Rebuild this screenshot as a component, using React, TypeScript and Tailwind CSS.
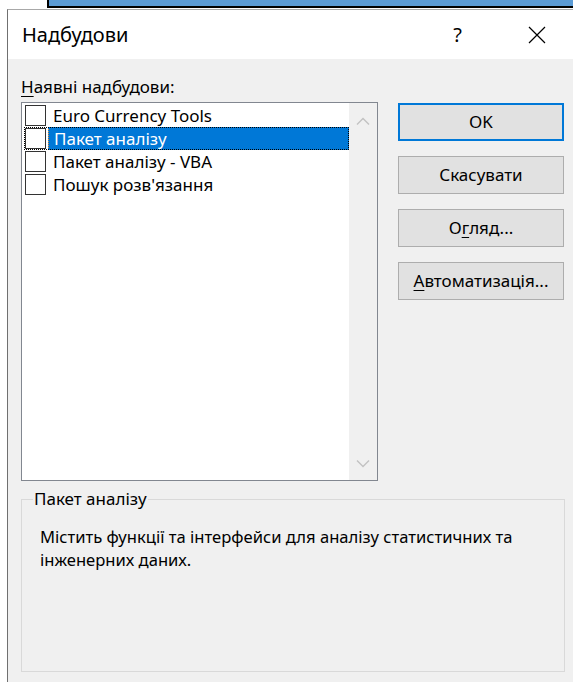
import React from 'react';

type AddIn = { name: string; checked: boolean };

const addIns: AddIn[] = [
  { name: 'Euro Currency Tools', checked: false },
  { name: 'Пакет аналізу', checked: false },
  { name: 'Пакет аналізу - VBA', checked: false },
  { name: "Пошук розв'язання", checked: false },
];

const Chevron = ({ up }: { up?: boolean }) => (
  <svg width="14" height="8" viewBox="0 0 14 8" fill="none">
    <path
      d={up ? 'M1 7.5 L7 1.5 L13 7.5' : 'M1 0.5 L7 6.5 L13 0.5'}
      stroke="#c2c2c2"
      strokeWidth="1.4"
    />
  </svg>
);

const DialogButton = ({
  children,
  primary,
}: {
  children: React.ReactNode;
  primary?: boolean;
}) => (
  <button
    className={`w-[166px] h-[38px] bg-[#e1e1e1] text-[17px] text-black flex items-center justify-center ${
      primary ? 'border-2 border-[#0078d7]' : 'border border-[#adadad]'
    }`}
  >
    {children}
  </button>
);

export default function App() {
  const selected = 1;

  return (
    <div className="w-[573px] h-[682px] overflow-hidden bg-white flex flex-col font-['Noto_Sans',sans-serif] text-black">
      {/* window peeking out behind the dialog */}
      <div className="h-[9px] shrink-0 flex">
        <div className="w-[47px]" />
        <div className="flex-1 h-[8px] bg-[#5b9bd5] border-l-2 border-b-2 border-black" />
      </div>

      <div className="flex-1 ml-[7px] border-l border-t border-l-[#707070] border-t-[#a8a8a8] flex flex-col min-h-0">
        {/* title bar */}
        <div className="h-[49px] shrink-0 bg-white flex items-center pl-[14px]">
          <span className="text-[20px] leading-none">Надбудови</span>
          <div className="ml-auto flex items-center pr-[27px]">
            <span className="text-[20px] leading-none">?</span>
            <svg className="ml-[66px]" width="18" height="18" viewBox="0 0 18 18">
              <path d="M1 1 L17 17 M17 1 L1 17" stroke="#000" strokeWidth="1.2" />
            </svg>
          </div>
        </div>

        {/* client area */}
        <div className="flex-1 bg-[#f0f0f0] pl-[13px] pt-[16px]">
          <div className="text-[17px] leading-[24px]">
            <span className="underline underline-offset-[3px]">Н</span>аявні надбудови:
          </div>

          <div className="mt-[3px] flex items-start">
            {/* add-in list */}
            <div className="w-[357px] h-[379px] border border-[#828790] bg-white flex">
              <div className="flex-1 pt-[1px] pl-[2px]">
                {addIns.map((item, i) => {
                  const isSel = i === selected;
                  return (
                    <div
                      key={item.name}
                      className={`h-[23px] flex items-center pl-[1px] ${
                        isSel ? 'outline outline-1 outline-dotted outline-black -outline-offset-1' : ''
                      }`}
                    >
                      <div className="w-[21px] h-[21px] border border-[#333333] bg-white shrink-0" />
                      <div
                        className={`ml-[2px] h-[23px] flex-1 flex items-center pl-[5px] text-[17px] whitespace-nowrap ${
                          isSel
                            ? 'bg-[#0078d7] text-white border border-dotted border-[#e8903a] pl-[4px]'
                            : ''
                        }`}
                      >
                        {item.name}
                      </div>
                    </div>
                  );
                })}
              </div>
              <div className="w-[28px] bg-[#f0f0f0] flex flex-col items-center justify-between pt-[14px] pb-[12px]">
                <Chevron up />
                <Chevron />
              </div>
            </div>

            {/* action buttons */}
            <div className="ml-[20px] mt-[1px] flex flex-col gap-[15px]">
              <DialogButton primary>OK</DialogButton>
              <DialogButton>Скасувати</DialogButton>
              <DialogButton>
                О<span className="underline underline-offset-[3px]">г</span>ляд...
              </DialogButton>
              <DialogButton>
                <span className="underline underline-offset-[3px]">А</span>втоматизація...
              </DialogButton>
            </div>
          </div>

          {/* description of the selected add-in */}
          <fieldset className="mt-[6px] w-[544px] h-[185px] border border-[#d9d9d9] px-0 pt-[14px]">
            <legend className="ml-[11px] px-[1px] text-[17px] leading-[24px]">Пакет аналізу</legend>
            <p className="pl-[18px] text-[16.6px] leading-[23px] whitespace-nowrap">
              Містить функції та інтерфейси для аналізу статистичних та
              <br />
              інженерних даних.
            </p>
          </fieldset>
        </div>
      </div>
    </div>
  );
}
